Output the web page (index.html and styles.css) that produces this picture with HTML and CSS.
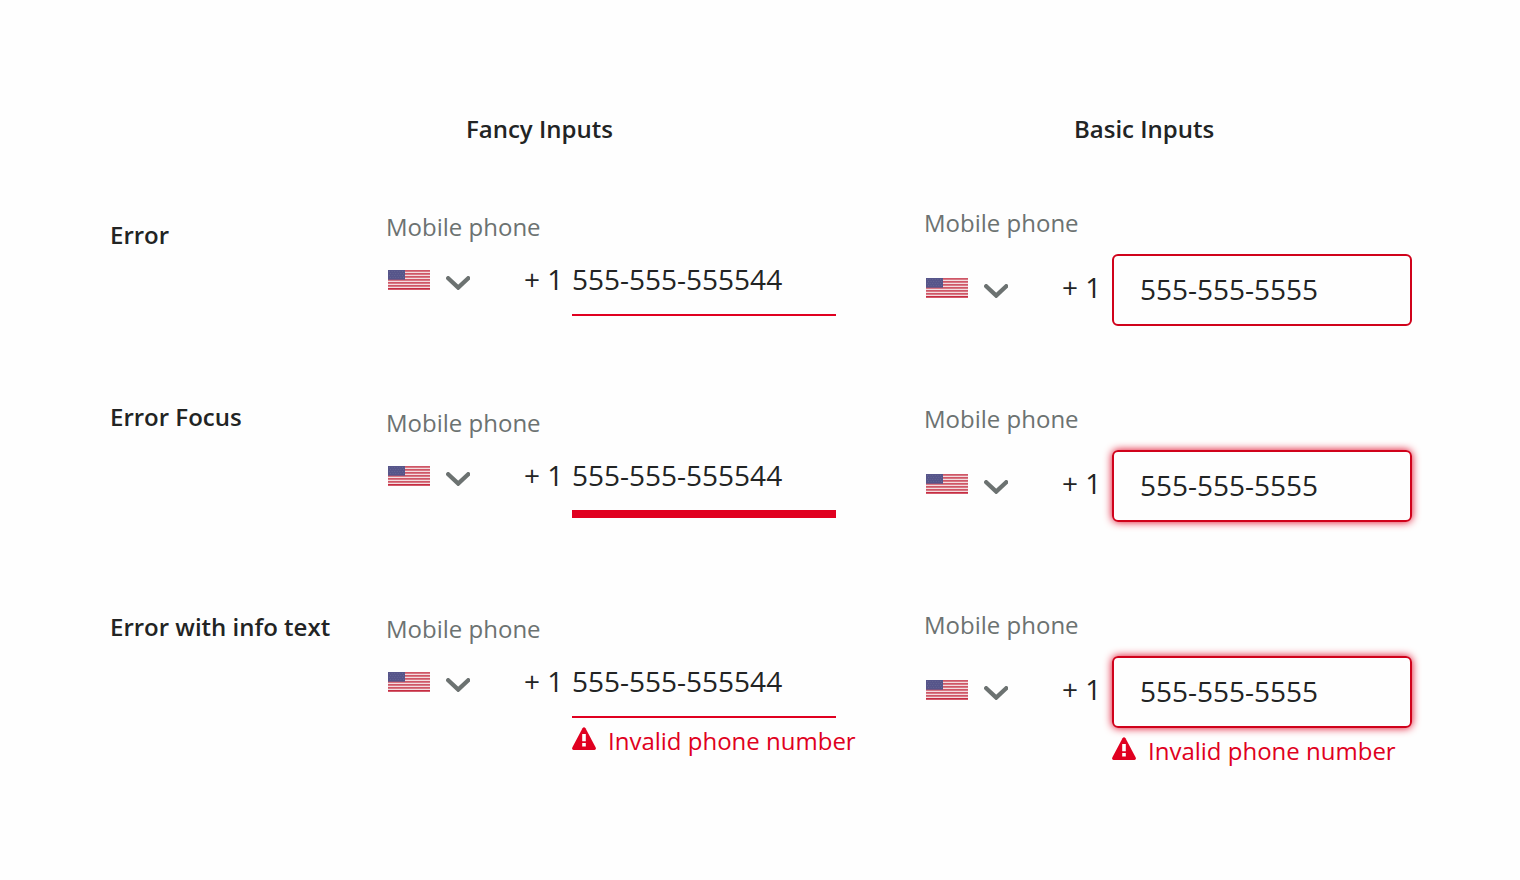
FILE: index.html
```html
<!DOCTYPE html>
<html lang="en">
<head>
<meta charset="utf-8">
<meta name="viewport" content="width=device-width, initial-scale=1">
<title>Phone input error states</title>
<link rel="stylesheet" href="styles.css">
</head>
<body>
<svg class="sprite" aria-hidden="true">
  <symbol id="flag" viewBox="0 0 42 20" preserveAspectRatio="none">
    <rect width="42" height="19.7" fill="#f3dcdf"/>
    <path d="M0 .8H42M0 3.8H42M0 6.8H42M0 9.9H42M0 12.9H42M0 15.9H42" stroke="#cf5767" stroke-width="1.7"/>
    <path d="M0 18.9H42" stroke="#c62d42" stroke-width="1.6"/>
    <rect width="17" height="9.7" fill="#56558a"/>
    <path d="M1 1.5H17M2 3.5H17M1 5.5H17M2 7.5H17" stroke="#6a6996" stroke-width=".8" stroke-dasharray="1 1.6"/>
  </symbol>
  <symbol id="chevron" viewBox="0 0 24 14">
    <path d="M2.2 2.2L12.2 11.6L22.2 2.2" fill="none" stroke="#6c7271" stroke-width="4.3" stroke-linecap="round"/>
  </symbol>
  <symbol id="warning" viewBox="0 0 24 23">
    <path d="M10.5 1.2Q12-.6 13.5 1.2L23.7 20.5Q24.4 22.6 22.5 23H1.5Q-.4 22.6.3 20.5Z" fill="#e00020"/>
    <path d="M10.2 7H13.8V14.2H10.2ZM10.2 16H13.8V19.4H10.2Z" fill="#fefefe"/>
  </symbol>
</svg>
<main class="sheet">
  <header class="grid head">
    <h2 class="col-title col-fancy">Fancy Inputs</h2>
    <h2 class="col-title col-basic">Basic Inputs</h2>
  </header>

  <section class="grid state state-error">
    <h3 class="state-name">Error</h3>
    <div class="field fancy">
      <label class="label" for="f1">Mobile phone</label>
      <div class="control">
        <button class="country" type="button" aria-label="Country"><svg class="flag"><use href="#flag"/></svg><svg class="chevron"><use href="#chevron"/></svg></button>
        <span class="code">+ 1</span>
        <input class="input" id="f1" type="tel" value="555-555-555544">
      </div>
    </div>
    <div class="field basic">
      <label class="label" for="b1">Mobile phone</label>
      <div class="control">
        <button class="country" type="button" aria-label="Country"><svg class="flag"><use href="#flag"/></svg><svg class="chevron"><use href="#chevron"/></svg></button>
        <span class="code">+ 1</span>
        <input class="input" id="b1" type="tel" value="555-555-5555">
      </div>
    </div>
  </section>

  <section class="grid state state-focus">
    <h3 class="state-name">Error Focus</h3>
    <div class="field fancy focused">
      <label class="label" for="f2">Mobile phone</label>
      <div class="control">
        <button class="country" type="button" aria-label="Country"><svg class="flag"><use href="#flag"/></svg><svg class="chevron"><use href="#chevron"/></svg></button>
        <span class="code">+ 1</span>
        <input class="input" id="f2" type="tel" value="555-555-555544">
      </div>
    </div>
    <div class="field basic focused">
      <label class="label" for="b2">Mobile phone</label>
      <div class="control">
        <button class="country" type="button" aria-label="Country"><svg class="flag"><use href="#flag"/></svg><svg class="chevron"><use href="#chevron"/></svg></button>
        <span class="code">+ 1</span>
        <input class="input" id="b2" type="tel" value="555-555-5555">
      </div>
    </div>
  </section>

  <section class="grid state state-info">
    <h3 class="state-name">Error with info text</h3>
    <div class="field fancy">
      <label class="label" for="f3">Mobile phone</label>
      <div class="control">
        <button class="country" type="button" aria-label="Country"><svg class="flag"><use href="#flag"/></svg><svg class="chevron"><use href="#chevron"/></svg></button>
        <span class="code">+ 1</span>
        <input class="input" id="f3" type="tel" value="555-555-555544" aria-describedby="e1">
      </div>
      <p class="message" id="e1"><svg class="warning"><use href="#warning"/></svg>Invalid phone number</p>
    </div>
    <div class="field basic focused">
      <label class="label" for="b3">Mobile phone</label>
      <div class="control">
        <button class="country" type="button" aria-label="Country"><svg class="flag"><use href="#flag"/></svg><svg class="chevron"><use href="#chevron"/></svg></button>
        <span class="code">+ 1</span>
        <input class="input" id="b3" type="tel" value="555-555-5555" aria-describedby="e2">
      </div>
      <p class="message" id="e2"><svg class="warning"><use href="#warning"/></svg>Invalid phone number</p>
    </div>
  </section>
</main>
</body>
</html>
```
FILE: styles.css
```css
* {
  box-sizing: border-box;
}

body {
  margin: 0;
  background: #fefefe;
  color: #222424;
  font-family: "Open Sans", "Noto Sans", sans-serif;
  font-size: 24px;
  line-height: 32px;
}

h2,
h3,
p {
  margin: 0;
  font-size: 24px;
}

h2,
h3 {
  font-weight: 600;
}

.sprite {
  display: none;
}

.sheet {
  padding: 113px 108px 80px 110px;
}

.grid {
  display: grid;
  grid-template-columns: 276px minmax(0, 538fr) minmax(0, 488fr);
  align-items: start;
}

.head {
  margin-bottom: 60px;
}

.col-fancy {
  grid-column: 2;
  padding-left: 80px;
}

.col-basic {
  padding-left: 150px;
}

.state-error {
  margin-bottom: 75px;
}

.state-focus {
  margin-bottom: 85px;
}

.state-error .state-name {
  padding-top: 14px;
}

.state-info .state-name {
  padding-top: 4px;
}

.label {
  display: block;
  color: #6c7271;
}

.fancy {
  padding-top: 6px;
}

.basic {
  padding-top: 2px;
}

.control {
  display: grid;
  align-items: start;
  font-size: 28px;
  line-height: 36px;
}

.fancy .control {
  grid-template-columns: 138px 48px minmax(0, 264px);
  margin-top: 18px;
}

.basic .control {
  grid-template-columns: 138px 50px minmax(0, 1fr);
  margin-top: 15px;
}

.basic .country,
.basic .code {
  margin-top: 15px;
}

.country {
  display: flex;
  align-items: center;
  justify-self: start;
  gap: 16px;
  height: 38px;
  padding: 0 0 0 2px;
  border: 0;
  background: none;
  cursor: pointer;
}

.flag {
  width: 42px;
  height: 20px;
}

.chevron {
  width: 24px;
  height: 14px;
  margin-top: 6px;
  overflow: visible;
}

.input {
  width: 100%;
  margin: 0;
  border: 0 solid #d0021b;
  border-radius: 0;
  background: transparent;
  color: inherit;
  font: inherit;
  outline: none;
}

.fancy .input {
  height: 55px;
  padding: 0 0 17px;
  border-bottom: 2px solid #e00020;
}

.fancy.focused .input {
  height: 61px;
  border-bottom-width: 8px;
}

.basic .input {
  height: 72px;
  padding: 0 26px 2px;
  border-width: 2px;
  border-radius: 6px;
}

.basic.focused .input {
  box-shadow: 0 0 8px #e00020;
}

.message {
  display: flex;
  gap: 12px;
  margin-top: 7px;
  color: #e00020;
  white-space: nowrap;
}

.fancy .message {
  padding-left: 186px;
}

.basic .message {
  padding-left: 188px;
}

.warning {
  flex: none;
  width: 24px;
  height: 23px;
  margin-top: 2px;
}
```
